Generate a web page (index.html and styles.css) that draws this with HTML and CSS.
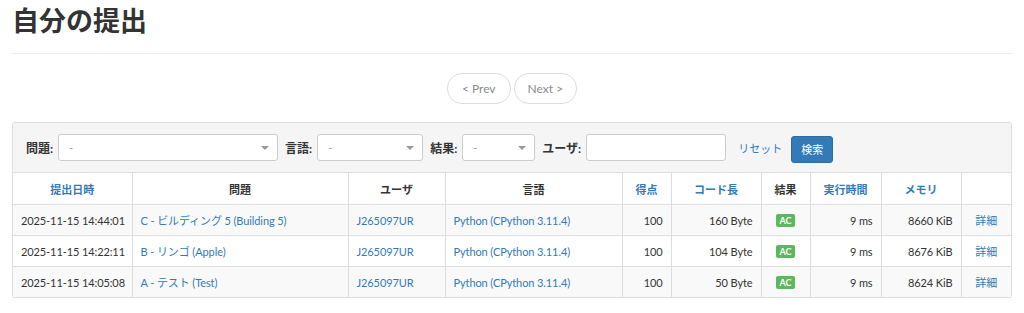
FILE: index.html
```html
<!DOCTYPE html>
<html lang="ja">
<head>
  <meta charset="UTF-8" />
  <title>自分の提出</title>
  <link rel="stylesheet" href="styles.css">
</head>
<body>
  <div class="container">
    <h2 class="page-title">自分の提出</h2>
    <hr>

    <div class="pager">
      <a class="pager-btn" href="#">&lt; Prev</a>
      <a class="pager-btn" href="#">Next &gt;</a>
    </div>

    <div class="panel">
      <form class="filter">
        <label class="filter-label">問題:</label>
        <div class="select select-task"><span>-</span><i class="caret"></i></div>
        <label class="filter-label">言語:</label>
        <div class="select select-lang"><span>-</span><i class="caret"></i></div>
        <label class="filter-label">結果:</label>
        <div class="select select-status"><span>-</span><i class="caret"></i></div>
        <label class="filter-label">ユーザ:</label>
        <input class="user-input" type="text">
        <a class="reset" href="#">リセット</a>
        <button class="search-btn" type="button">検索</button>
      </form>

      <table class="subs">
        <colgroup>
          <col style="width:119px"><col style="width:216px"><col style="width:97px"><col style="width:177px">
          <col style="width:49px"><col style="width:90px"><col style="width:49px"><col style="width:71px">
          <col style="width:80px"><col>
        </colgroup>
        <thead>
          <tr>
            <th class="sort">提出日時</th>
            <th>問題</th>
            <th>ユーザ</th>
            <th>言語</th>
            <th class="sort">得点</th>
            <th class="sort">コード長</th>
            <th>結果</th>
            <th class="sort">実行時間</th>
            <th class="sort">メモリ</th>
            <th></th>
          </tr>
        </thead>
        <tbody>
          <tr>
            <td>2025-11-15 14:44:01</td>
            <td><a href="#">C - ビルディング 5 (Building 5)</a></td>
            <td><a href="#">J265097UR</a></td>
            <td><a href="#">Python (CPython 3.11.4)</a></td>
            <td class="num">100</td>
            <td class="num">160 Byte</td>
            <td class="mid"><span class="label-ac">AC</span></td>
            <td class="num">9 ms</td>
            <td class="num">8660 KiB</td>
            <td class="mid"><a href="#">詳細</a></td>
          </tr>
          <tr>
            <td>2025-11-15 14:22:11</td>
            <td><a href="#">B - リンゴ (Apple)</a></td>
            <td><a href="#">J265097UR</a></td>
            <td><a href="#">Python (CPython 3.11.4)</a></td>
            <td class="num">100</td>
            <td class="num">104 Byte</td>
            <td class="mid"><span class="label-ac">AC</span></td>
            <td class="num">9 ms</td>
            <td class="num">8676 KiB</td>
            <td class="mid"><a href="#">詳細</a></td>
          </tr>
          <tr>
            <td>2025-11-15 14:05:08</td>
            <td><a href="#">A - テスト (Test)</a></td>
            <td><a href="#">J265097UR</a></td>
            <td><a href="#">Python (CPython 3.11.4)</a></td>
            <td class="num">100</td>
            <td class="num">50 Byte</td>
            <td class="mid"><span class="label-ac">AC</span></td>
            <td class="num">9 ms</td>
            <td class="num">8624 KiB</td>
            <td class="mid"><a href="#">詳細</a></td>
          </tr>
        </tbody>
      </table>
    </div>
  </div>
</body>
</html>
```

FILE: styles.css
```css
html, body {
  margin: 0;
  padding: 0;
  background: #fff;
  color: #333;
  font-family: Lato, "Noto Sans CJK JP", sans-serif;
  font-size: 12px;
}

a {
  color: #337ab7;
  text-decoration: none;
}

.container {
  padding: 0 12px;
}

.page-title {
  margin: 0;
  padding-top: 4px;
  font-size: 27px;
  line-height: 34px;
  font-weight: bold;
  color: #333;
}

hr {
  margin: 15px 0 0;
  border: 0;
  border-top: 1px solid #eee;
}

.pager {
  display: flex;
  justify-content: center;
  gap: 3px;
  margin: 19px 0 18px;
}

.pager-btn {
  display: block;
  height: 29px;
  line-height: 29px;
  padding: 0 13px;
  border: 1px solid #ddd;
  border-radius: 15px;
  color: #8a8a8a;
  font-size: 12px;
}

.pager-btn:first-child {
  padding: 0 14px;
}

.panel {
  border: 1px solid #ddd;
  border-radius: 3px;
  box-shadow: 0 1px 1px rgba(0,0,0,0.05);
  overflow: hidden;
}

.filter {
  display: flex;
  align-items: center;
  height: 49px;
  padding: 0 0 0 13px;
  background: #f5f5f5;
  border-bottom: 1px solid #ddd;
  margin: 0;
}

.filter-label {
  font-weight: bold;
  font-size: 12px;
  margin-right: 5px;
}

.select {
  display: flex;
  align-items: center;
  justify-content: space-between;
  box-sizing: border-box;
  height: 27px;
  padding: 0 8px 0 10px;
  margin-right: 7px;
  background: #fff;
  border: 1px solid #ccc;
  border-radius: 3px;
  color: #999;
  font-size: 11px;
}

.select-task { width: 220px; }
.select-lang { width: 106px; }
.select-status { width: 73px; }

.caret {
  width: 0;
  height: 0;
  border-left: 4px solid transparent;
  border-right: 4px solid transparent;
  border-top: 4px solid #999;
}

.user-input {
  box-sizing: border-box;
  width: 140px;
  height: 27px;
  margin: 0 12px 0 0;
  border: 1px solid #ccc;
  border-radius: 3px;
  padding: 0 6px;
}

.reset {
  font-size: 11px;
  margin-right: 9px;
}

.search-btn {
  height: 27px;
  padding: 0 9px;
  background: #337ab7;
  border: 1px solid #2e6da4;
  border-radius: 3px;
  color: #fff;
  font-family: Lato, "Noto Sans CJK JP", sans-serif;
  font-size: 11px;
  margin-top: 3px;
}

.subs {
  width: 100%;
  border-collapse: collapse;
  table-layout: fixed;
  font-size: 11px;
}

.subs th,
.subs td {
  border-left: 1px solid #ddd;
  padding: 0 8px;
  white-space: nowrap;
  overflow: hidden;
}

.subs th:first-child,
.subs td:first-child {
  border-left: 0;
}

.subs th {
  height: 31px;
  text-align: center;
  font-weight: bold;
  font-size: 11px;
  color: #333;
}

.subs th.sort {
  color: #337ab7;
}

.subs td {
  height: 30px;
  border-top: 1px solid #ddd;
  letter-spacing: -0.1px;
}

.subs tbody tr:nth-child(odd) {
  background: #f9f9f9;
}

.subs td.num {
  text-align: right;
}

.subs td.mid {
  text-align: center;
}

.label-ac {
  display: inline-block;
  background: #5cb85c;
  color: #fff;
  font-size: 9px;
  font-weight: bold;
  line-height: 13px;
  padding: 0 4px;
  border-radius: 2px;
  vertical-align: middle;
}
```
